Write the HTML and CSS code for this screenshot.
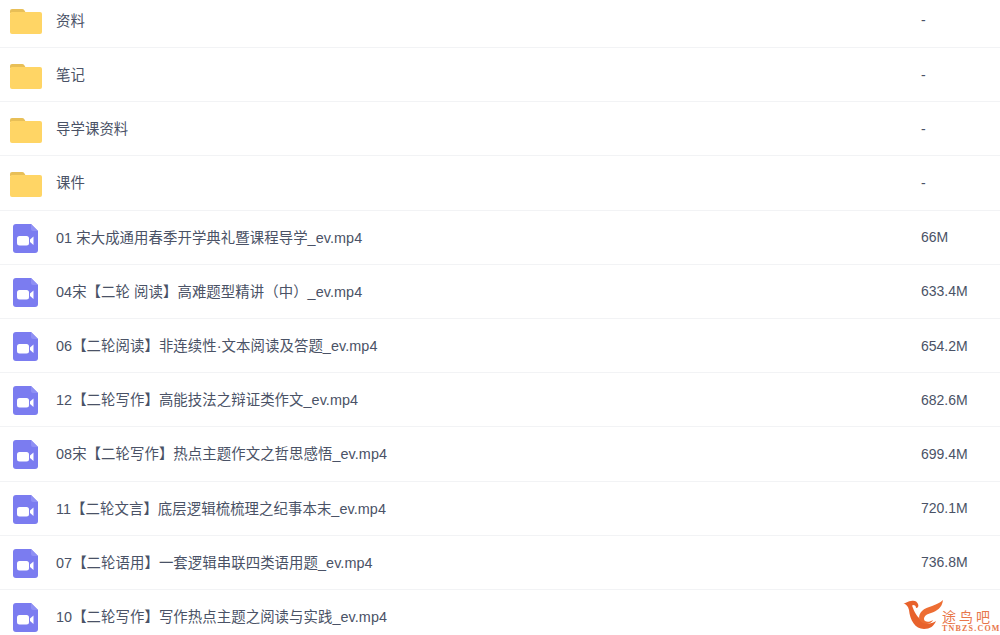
FILE: index.html
```html
<!DOCTYPE html>
<html lang="en">
<head>
    <meta charset="UTF-8">
    <title>文件列表</title>
    <link rel="stylesheet" href="styles.css">
</head>
<body>
    <svg class="icon-defs" width="0" height="0">
        <symbol id="folder" viewBox="0 0 32 26">
            <path d="M0 3a2 2 0 0 1 2-2h10a3 3 0 0 1 2.500 1.400L16 5H0z" fill="#e8bf57"/>
            <path d="M0 6a2 2 0 0 1 2-2h28a2 2 0 0 1 2 2v18a2 2 0 0 1-2 2H2a2 2 0 0 1-2-2z" fill="#ffd565"/>
        </symbol>
        <symbol id="video" viewBox="0 0 25 29">
            <path d="M3 0h15l7 7v19a3 3 0 0 1-3 3H3a3 3 0 0 1-3-3V3a3 3 0 0 1 3-3z" fill="#7b7cf0"/>
            <path d="M18 0l7 7h-5a2 2 0 0 1-2-2z" fill="#8f90f4"/>
            <rect x="4" y="12" width="12" height="9.500" rx="2.500" fill="#fff"/>
            <path d="M17 15.500l3.500-3v8.500l-3.500-3z" fill="#fff"/>
        </symbol>
    </svg>

    <div class="file-list">
        <div class="file-row">
            <svg class="folder-icon"><use href="#folder"/></svg>
            <span class="file-name">资料</span>
            <span class="file-size">-</span>
        </div>
        <div class="file-row">
            <svg class="folder-icon"><use href="#folder"/></svg>
            <span class="file-name">笔记</span>
            <span class="file-size">-</span>
        </div>
        <div class="file-row">
            <svg class="folder-icon"><use href="#folder"/></svg>
            <span class="file-name">导学课资料</span>
            <span class="file-size">-</span>
        </div>
        <div class="file-row">
            <svg class="folder-icon"><use href="#folder"/></svg>
            <span class="file-name">课件</span>
            <span class="file-size">-</span>
        </div>
        <div class="file-row">
            <svg class="video-icon"><use href="#video"/></svg>
            <span class="file-name">01 宋大成通用春季开学典礼暨课程导学_ev.mp4</span>
            <span class="file-size">66M</span>
        </div>
        <div class="file-row">
            <svg class="video-icon"><use href="#video"/></svg>
            <span class="file-name">04宋【二轮 阅读】高难题型精讲（中）_ev.mp4</span>
            <span class="file-size">633.4M</span>
        </div>
        <div class="file-row">
            <svg class="video-icon"><use href="#video"/></svg>
            <span class="file-name">06【二轮阅读】非连续性·文本阅读及答题_ev.mp4</span>
            <span class="file-size">654.2M</span>
        </div>
        <div class="file-row">
            <svg class="video-icon"><use href="#video"/></svg>
            <span class="file-name">12【二轮写作】高能技法之辩证类作文_ev.mp4</span>
            <span class="file-size">682.6M</span>
        </div>
        <div class="file-row">
            <svg class="video-icon"><use href="#video"/></svg>
            <span class="file-name">08宋【二轮写作】热点主题作文之哲思感悟_ev.mp4</span>
            <span class="file-size">699.4M</span>
        </div>
        <div class="file-row">
            <svg class="video-icon"><use href="#video"/></svg>
            <span class="file-name">11【二轮文言】底层逻辑梳梳理之纪事本末_ev.mp4</span>
            <span class="file-size">720.1M</span>
        </div>
        <div class="file-row">
            <svg class="video-icon"><use href="#video"/></svg>
            <span class="file-name">07【二轮语用】一套逻辑串联四类语用题_ev.mp4</span>
            <span class="file-size">736.8M</span>
        </div>
        <div class="file-row">
            <svg class="video-icon"><use href="#video"/></svg>
            <span class="file-name">10【二轮写作】写作热点主题之阅读与实践_ev.mp4</span>
            <span class="file-size"></span>
        </div>
    </div>

    <div class="watermark">
        <svg class="watermark-mark" viewBox="0 0 40 31">
            <path d="M0 3c3 1 5-2 8-2 3-1 6 0 7 3 1 2 0 4-2 4 0-2-1-3-3-3-1 0-1 1 0 3 2 6 6 11 11 14 3 2 8 2 12-1-2 5-6 8-12 8C12 29 7 20 6 10 5 6 3 4 0 3z" fill="#e8622c"/>
            <path d="M40 0c-1 8-6 11-12 13-4 1-7 3-7 6 0 3 5 4 9 1-1 3-6 5-10 3-5-2-5-8-1-12 5-5 15-5 21-11z" fill="#ed6d33"/>
        </svg>
        <div class="watermark-text">
            <span class="watermark-cn">途鸟吧</span>
            <span class="watermark-en">TNBZS.COM</span>
        </div>
    </div>
</body>
</html>
```

FILE: styles.css
```css
html, body {
    height: 635px;
    overflow: hidden;
}
body {
    margin: 0;
    background-color: #fff;
    font-family: "Liberation Sans", "Noto Sans CJK SC", sans-serif;
    font-size: 14px;
    color: #4a5266;
    position: relative;
}
.icon-defs {
    display: block;
    height: 0;
}
.file-list {
    margin-top: -6.2px;
}
.file-row {
    height: 54.2px;
    box-sizing: border-box;
    border-bottom: 1px solid #f2f3f5;
    display: flex;
    align-items: center;
}
.folder-icon {
    width: 32px;
    height: 26px;
    margin: 2px 14px 0 10px;
    flex-shrink: 0;
}
.video-icon {
    width: 25px;
    height: 29px;
    margin: 2px 18px 0 13px;
    flex-shrink: 0;
}
.file-name {
    flex: 1;
    font-size: 14.4px;
    letter-spacing: 0.07px;
    position: relative;
    top: -1px;
}
.file-size {
    width: 79px;
}
.watermark {
    position: absolute;
    left: 903px;
    top: 600px;
    display: flex;
}
.watermark-mark {
    width: 40px;
    height: 31px;
}
.watermark-text {
    display: flex;
    flex-direction: column;
    padding-top: 11px;
    margin-left: -1px;
    color: #e8764a;
}
.watermark-cn {
    font-size: 14px;
    line-height: 13px;
    letter-spacing: 3px;
}
.watermark-en {
    font-family: "Liberation Serif", serif;
    font-size: 8px;
    line-height: 9px;
    font-weight: bold;
    letter-spacing: 1.200px;
}
```
